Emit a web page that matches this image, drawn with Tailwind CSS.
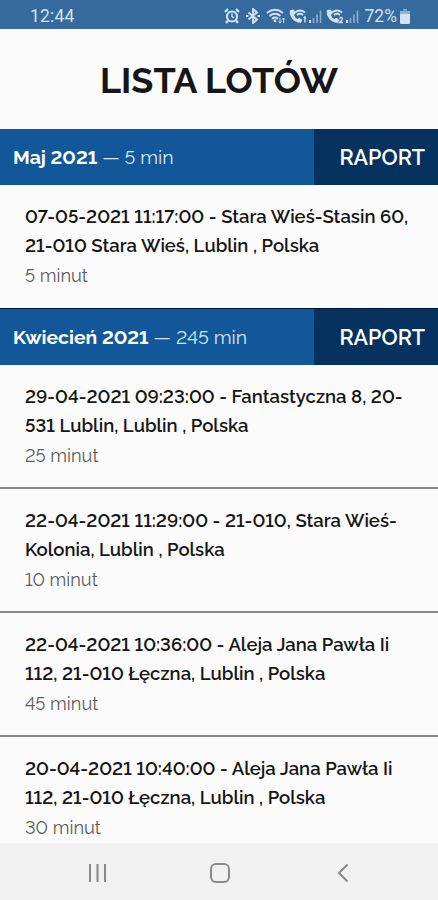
<!DOCTYPE html>
<html lang="pl">
<head>
    <meta charset="UTF-8">
    <meta name="viewport" content="width=device-width, initial-scale=1.0">
    <title>Lista lotów</title>
    <script src="https://cdn.jsdelivr.net/npm/@tailwindcss/browser@4"></script>
</head>
<body class="bg-[#fbfbfb] font-[Raleway,Lato,sans-serif] lining-nums text-[#161616]">
    <div class="h-[900px] flex flex-col overflow-hidden">
        <!-- Status bar -->
        <div class="h-[29px] shrink-0 flex items-center bg-[#366a9f] pl-[30px] pr-[27px] pt-[3px] text-[#cfe3f3] font-[Roboto,sans-serif] text-[17.5px] whitespace-nowrap">
            <span class="tracking-[0.2px]">12:44</span>
            <div class="ml-auto flex items-center">
                <svg class="w-4 h-4" viewBox="0 0 16 16" fill="none" stroke="currentColor" stroke-width="2.2">
                    <circle cx="8" cy="8.5" r="5"/>
                    <path d="M1 4l3-3M15 4l-3-3M4 12.500L2 15M12 12.500l2 2.500"/>
                    <path d="M8 5.500v3.200l2 1.200" stroke-width="1.400"/>
                </svg>
                <svg class="w-3.5 h-4 ml-[6px]" viewBox="0 0 14 16" fill="none" stroke="currentColor" stroke-width="1.900">
                    <path d="M2.500 4.500l8.500 7L7 15V1l4 3.500-8.500 7"/>
                    <path d="M0 8h2.500M11.500 8H14"/>
                </svg>
                <svg class="w-5 h-4 ml-[6px]" viewBox="0 0 20 16" fill="none" stroke="currentColor" stroke-width="1.800">
                    <path d="M1 5q8-6.500 16 0M3.500 8q5.500-4.500 11 0M6 10.800q3-2.500 6 0"/>
                    <path d="M9 11.500v2.500" stroke-width="2.500"/>
                    <path d="M14 10v5M12.500 13.500L14 15l1.500-1.500M17.500 15v-5M16 11.500l1.500-1.500 1.500 1.500" stroke-width="1"/>
                </svg>
                <svg class="w-[35px] h-4 ml-[2px]" viewBox="0 0 35 16" fill="none" stroke="currentColor">
                    <path d="M2 2C.5 8 5.500 14.500 12.500 15l2-3-3-2.200-2 1.200C7.500 10 6.300 8.500 6 7l1.500-1.500L6 1.500z" fill="currentColor" stroke="none"/>
                    <path d="M7 4.500q5-4 10 0M9 7q3-2.500 6 0" stroke-width="1.700"/>
                    <path d="M15.500 10l1.500-1v5.500" stroke-width="1.500"/>
                    <path d="M22 12v3" stroke-width="2"/>
                    <path d="M25.500 10v5M29 6.500V15M32.500 2.500V15" stroke-width="1.600" opacity=".55"/>
                </svg>
                <svg class="w-[35px] h-4 ml-[2px]" viewBox="0 0 35 16" fill="none" stroke="currentColor">
                    <path d="M2 2C.5 8 5.500 14.500 12.500 15l2-3-3-2.200-2 1.200C7.500 10 6.300 8.500 6 7l1.500-1.500L6 1.500z" fill="currentColor" stroke="none"/>
                    <path d="M7 4.500q5-4 10 0M9 7q3-2.500 6 0" stroke-width="1.700"/>
                    <path d="M14.500 10.500q1.500-2 3 0 0 1.500-3 4h3.500" stroke-width="1.300"/>
                    <path d="M22 12v3" stroke-width="2"/>
                    <path d="M25.500 10v5M29 6.500V15M32.500 2.500V15" stroke-width="1.600" opacity=".55"/>
                </svg>
                <span class="ml-[5px]">72%</span>
                <svg class="w-3 h-[15px] ml-[2px]" viewBox="0 0 12 15" fill="currentColor">
                    <path d="M4 0h4v1.500H4zM1 2h10v2.500H1z" opacity=".6"/>
                    <rect x="1" y="4.500" width="10" height="10.500" rx="1"/>
                </svg>
            </div>
        </div>

        <h1 class="h-[100px] shrink-0 flex items-center justify-center pt-[2px] text-[36px] font-bold">LISTA LOTÓW</h1>

        <!-- Flights grouped by month -->
        <main class="flex-1 min-h-0 overflow-hidden text-[18.5px] leading-[29.3px] whitespace-nowrap">
            <section>
                <header class="h-14 flex bg-[#12579a] text-white">
                    <div class="flex-1 flex items-center pl-[13px] pt-px text-[19.4px]"><p><b class="font-bold">Maj 2021</b> <span class="text-[#d6e5f2]">— 5 min</span></p></div>
                    <a class="w-[124px] flex items-center justify-end pr-[13px] pt-[2px] bg-[#05325f] text-[21.5px] font-semibold">RAPORT</a>
                </header>
                <article class="h-[123px] pt-[17px] pl-[25px]">
                    <h2 class="font-semibold"><span>07-05-2021 11:17:00 - Stara Wieś-Stasin 60,</span><br><span>21-010 Stara Wieś, Lublin , Polska</span></h2>
                    <p class="text-[18.2px] text-[#5c5c5c]">5 minut</p>
                </article>
            </section>
            <section>
                <header class="h-[57px] flex border-t border-[#06143a] bg-[#12579a] text-white">
                    <div class="flex-1 flex items-center pl-[13px] pt-px text-[19.4px]"><p><b class="font-bold">Kwiecień 2021</b> <span class="text-[#d6e5f2]">— 245 min</span></p></div>
                    <a class="w-[124px] flex items-center justify-end pr-[13px] pt-[2px] bg-[#05325f] text-[21.5px] font-semibold">RAPORT</a>
                </header>
                <article class="h-[124px] pt-[17px] pl-[25px] border-b-2 border-[#8a8a8a]">
                    <h2 class="font-semibold"><span>29-04-2021 09:23:00 - Fantastyczna 8, 20-</span><br><span>531 Lublin, Lublin , Polska</span></h2>
                    <p class="text-[18.2px] text-[#5c5c5c]">25 minut</p>
                </article>
                <article class="h-[124px] pt-[17px] pl-[25px] border-b-2 border-[#8a8a8a]">
                    <h2 class="font-semibold"><span>22-04-2021 11:29:00 - 21-010, Stara Wieś-</span><br><span>Kolonia, Lublin , Polska</span></h2>
                    <p class="text-[18.2px] text-[#5c5c5c]">10 minut</p>
                </article>
                <article class="h-[124px] pt-[17px] pl-[25px] border-b-2 border-[#8a8a8a]">
                    <h2 class="font-semibold"><span>22-04-2021 10:36:00 - Aleja Jana Pawła Ii</span><br><span>112, 21-010 Łęczna, Lublin , Polska</span></h2>
                    <p class="text-[18.2px] text-[#5c5c5c]">45 minut</p>
                </article>
                <article class="h-[124px] pt-[17px] pl-[25px]">
                    <h2 class="font-semibold"><span>20-04-2021 10:40:00 - Aleja Jana Pawła Ii</span><br><span>112, 21-010 Łęczna, Lublin , Polska</span></h2>
                    <p class="text-[18.2px] text-[#5c5c5c]">30 minut</p>
                </article>
            </section>
        </main>

        <!-- Android navigation -->
        <nav class="h-[57px] shrink-0 flex items-center justify-between bg-[#f1f1f1] pl-[87px] pr-[85px] pt-[2px] text-[#8a8a8a]">
            <svg class="w-5 h-5" viewBox="0 0 20 20" fill="none" stroke="currentColor" stroke-width="2"><path d="M3 1v18M10.500 1v18M18 1v18"/></svg>
            <svg class="w-5 h-5" viewBox="0 0 20 20" fill="none" stroke="currentColor" stroke-width="2"><rect x="1" y="1" width="18" height="18" rx="5"/></svg>
            <svg class="w-5 h-5" viewBox="0 0 20 20" fill="none" stroke="currentColor" stroke-width="2"><path d="M14.500 1.500L6 10l8.500 8.500"/></svg>
        </nav>
    </div>
</body>
</html>
